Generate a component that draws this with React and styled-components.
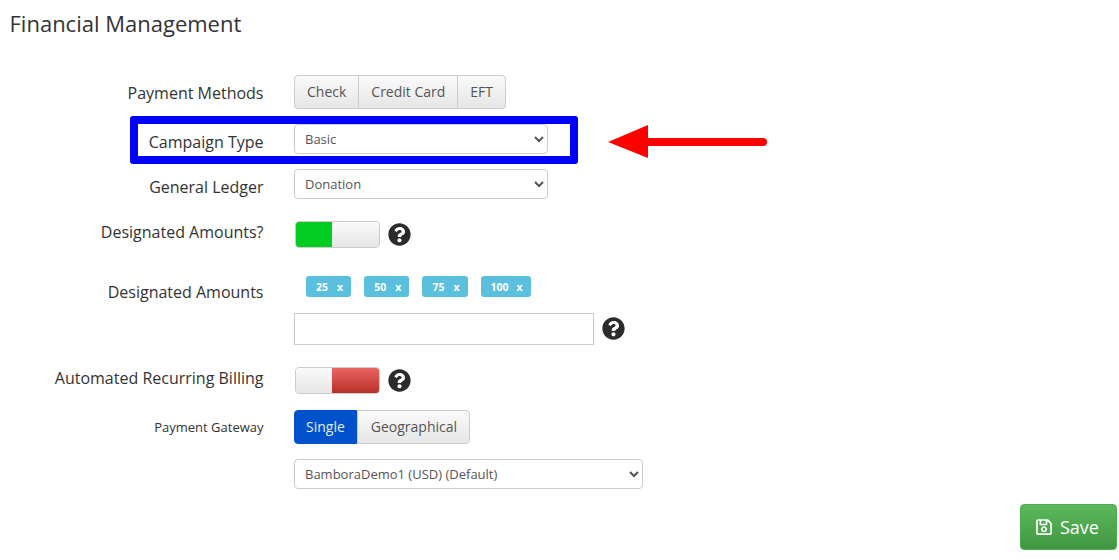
import React from 'react';
import styled, { createGlobalStyle } from 'styled-components';
import { FaQuestionCircle, FaRegSave } from 'react-icons/fa';

const GlobalStyle = createGlobalStyle`
  body {
    margin: 0;
    background: #fff;
    font-family: "Open Sans", "Liberation Sans", sans-serif;
    color: #333;
  }
`;

const Page = styled.div`
  position: relative;
  width: 1119px;
  height: 560px;
  overflow: hidden;
`;
const Title = styled.h1`
  margin: 0;
  padding: 0 0 2px 9.5px;
  height: 46px;
  line-height: 46px;
  font-size: 22px;
  font-weight: 400;
  color: #333;
`;
const Form = styled.div`
  display: flex;
  flex-direction: column;
  padding-top: 27px;
`;
const Row = styled.div`
  display: flex;
  align-items: flex-start;
  gap: 30.5px;
  margin-top: ${(p) => p.$gap || 0}px;
`;
const Label = styled.label`
  width: 263.5px;
  flex: none;
  padding-top: ${(p) => p.$top || 0}px;
  text-align: right;
  line-height: 20px;
  font-size: ${(p) => (p.$small ? 13 : 16)}px;
  color: #333;
`;
const ButtonGroup = styled.div`
  display: flex;
`;
const GroupButton = styled.button`
  height: 34px;
  padding: 0 ${(p) => (p.$active ? 11 : 12)}px 2px ${(p) => p.$left || (p.$active ? 11 : 12)}px;
  margin-left: -1px;
  margin-right: ${(p) => (p.$active ? 1 : 0)}px;
  border: 1px solid #ccc;
  font-family: inherit;
  font-size: 14px;
  color: ${(p) => (p.$active ? '#e4ecfa' : '#555')};
  background: ${(p) => (p.$active ? '#0052cc' : 'linear-gradient(#fafafa, #e6e6e6)')};
  border-color: ${(p) => (p.$active ? '#0052cc' : '#ccc')};
  &:first-child {
    margin-left: 0;
    border-radius: 4px 0 0 4px;
  }
  &:last-child {
    border-radius: 0 4px 4px 0;
  }
`;
const Select = styled.select`
  display: block;
  width: ${(p) => p.$width}px;
  height: 30px;
  padding: 0 6px;
  border: 1px solid #ccc;
  border-radius: 4px;
  background: #fff;
  font-family: inherit;
  font-size: 13px;
  color: #555;
`;
const ToggleLine = styled.div`
  display: flex;
  align-items: center;
  gap: 8px;
  padding-left: 1px;
`;
const Toggle = styled.div`
  display: flex;
  width: 85px;
  height: 27px;
  box-sizing: border-box;
  border: 1px solid #ccc;
  border-radius: 4px;
  overflow: hidden;
`;
const ToggleSide = styled.span`
  flex: ${(p) => (p.$first ? '0 0 36px' : '1')};
  background: ${(p) =>
    p.$tone === 'green'
      ? '#00cc22'
      : p.$tone === 'red'
        ? 'linear-gradient(#ea6462, #b92f2a)'
        : 'linear-gradient(#fafafa, #e6e6e6)'};
`;
const HelpIcon = styled(FaQuestionCircle)`
  display: block;
  flex: none;
  width: 23px;
  height: 23px;
  margin-bottom: 1px;
  color: #2b2b2b;
`;
const TagColumn = styled.div`
  display: flex;
  flex-direction: column;
  gap: 16px;
`;
const TagList = styled.div`
  display: flex;
  gap: 13px;
  padding-left: 12px;
`;
const Tag = styled.span`
  display: flex;
  align-items: center;
  justify-content: space-between;
  height: 21px;
  padding: 0 8px 0 10px;
  box-sizing: border-box;
  width: ${(p) => p.$width}px;
  border-radius: 3px;
  background: #5bc0de;
  color: #fff;
  font-size: 10.5px;
  font-weight: 700;
`;
const InputLine = styled.div`
  display: flex;
  align-items: center;
  gap: 8px;
`;
const TextInput = styled.input`
  width: 300px;
  height: 32px;
  box-sizing: border-box;
  border: 1px solid #ccc;
  background: #fff;
`;
const Footer = styled.div`
  display: flex;
  justify-content: flex-end;
  padding-right: 2px;
  margin-top: 15px;
`;
const SaveButton = styled.button`
  display: flex;
  align-items: center;
  justify-content: center;
  gap: 8px;
  width: 97px;
  height: 46px;
  padding: 0 7px 0 5px;
  border: 1px solid #4cae4c;
  border-radius: 4px;
  background: linear-gradient(#5cb85c, #419641);
  color: #fff;
  font-family: inherit;
  font-size: 18px;
  svg {
    width: 16px;
    height: 18px;
  }
`;
const Highlight = styled.div`
  position: absolute;
  left: 130px;
  top: 116px;
  width: 448px;
  height: 48px;
  box-sizing: border-box;
  border: 8px solid #0000ff;
  border-radius: 3px;
`;
const Arrow = styled.svg`
  position: absolute;
  left: 608px;
  top: 125px;
`;

const amounts = [
  { value: 25, width: 45.2 },
  { value: 50, width: 45.2 },
  { value: 75, width: 45.2 },
  { value: 100, width: 50 },
];

const App = () => (
  <Page>
    <GlobalStyle />
    <Title>Financial Management</Title>
    <Form>
      <Row>
        <Label $top={8}>Payment Methods</Label>
        <ButtonGroup>
          <GroupButton>Check</GroupButton>
          <GroupButton>Credit Card</GroupButton>
          <GroupButton>EFT</GroupButton>
        </ButtonGroup>
      </Row>
      <Row $gap={15}>
        <Label $top={8}>Campaign Type</Label>
        <Select $width={254} defaultValue="Basic">
          <option>Basic</option>
        </Select>
      </Row>
      <Row $gap={15}>
        <Label $top={8}>General Ledger</Label>
        <Select $width={254} defaultValue="Donation">
          <option>Donation</option>
        </Select>
      </Row>
      <Row $gap={22}>
        <Label $top={1}>Designated Amounts?</Label>
        <ToggleLine>
          <Toggle>
            <ToggleSide $first $tone="green" />
            <ToggleSide />
          </Toggle>
          <HelpIcon />
        </ToggleLine>
      </Row>
      <Row $gap={28}>
        <Label $top={6}>Designated Amounts</Label>
        <TagColumn>
          <TagList>
            {amounts.map((a) => (
              <Tag key={a.value} $width={a.width}>
                <span>{a.value}</span>
                <span>x</span>
              </Tag>
            ))}
          </TagList>
          <InputLine>
            <TextInput />
            <HelpIcon />
          </InputLine>
        </TagColumn>
      </Row>
      <Row $gap={22}>
        <Label $top={1}>Automated Recurring Billing</Label>
        <ToggleLine>
          <Toggle>
            <ToggleSide $first />
            <ToggleSide $tone="red" />
          </Toggle>
          <HelpIcon />
        </ToggleLine>
      </Row>
      <Row $gap={16}>
        <Label $top={7} $small>
          Payment Gateway
        </Label>
        <ButtonGroup>
          <GroupButton $active>Single</GroupButton>
          <GroupButton $left={13}>Geographical</GroupButton>
        </ButtonGroup>
      </Row>
      <Row $gap={15}>
        <Label />
        <Select $width={349} defaultValue="BamboraDemo1 (USD) (Default)">
          <option>BamboraDemo1 (USD) (Default)</option>
        </Select>
      </Row>
      <Footer>
        <SaveButton>
          <FaRegSave />
          Save
        </SaveButton>
      </Footer>
    </Form>
    <Highlight />
    <Arrow width="160" height="34" viewBox="0 0 160 34">
      <path d="M0 17 L40 0 V13 H155 a4 4 0 0 1 0 8 H40 V33 Z" fill="#ff0000" />
    </Arrow>
  </Page>
);

export default App;
